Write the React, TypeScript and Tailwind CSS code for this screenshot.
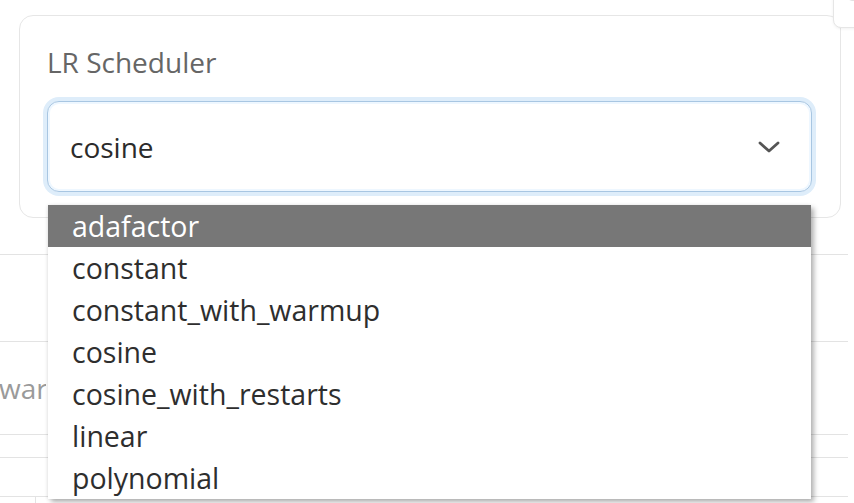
import React from "react";

const options = [
  "adafactor",
  "constant",
  "constant_with_warmup",
  "cosine",
  "cosine_with_restarts",
  "linear",
  "polynomial",
];

export default function App() {
  return (
    <div className="relative w-[854px] h-[503px] overflow-hidden bg-white font-['Open_Sans',sans-serif]">
      <div className="pt-[15px]">
        <div className="ml-[19px] w-[822px] h-[203px] rounded-[14px] border border-[#e6e6e6] bg-white px-[27px] pt-[29px]">
          <div className="text-[28px] leading-[34px] text-[#666666]">LR Scheduler</div>
          <div className="mt-[22px] flex h-[91px] w-[765px] items-center justify-between rounded-[12px] border-[1.5px] border-[#a8c6e2] bg-white pl-[22px] pr-[30px] shadow-[0_0_0_4px_#deedfa,inset_0_0_0_2px_#eef7ff]">
            <span className="text-[28px] leading-[38px] text-[#2b2b2b]">cosine</span>
            <svg width="24" height="14" viewBox="0 0 24 14" fill="none">
              <path d="M3 3 L12 11 L21 3" stroke="#555555" strokeWidth="2.8" strokeLinecap="round" strokeLinejoin="round" />
            </svg>
          </div>
        </div>

        <div className="mt-[36px] w-[848px]">
          <div className="h-[88px] border-t border-b border-[#e3e3e3]" />
          <div className="flex h-[93px] items-center border-b border-[#e3e3e3]">
            <div className="w-[46px] overflow-hidden whitespace-nowrap">
              <span className="-ml-[1px] text-[28px] leading-[38px] text-[#9a9a9a]">war</span>
            </div>
          </div>
          <div className="h-[23px] border-b border-[#e3e3e3]" />
          <div className="h-[39px] border-b border-[#e3e3e3]" />
          <div className="ml-[35px] h-[10px] border-l border-[#e3e3e3]" />
        </div>
      </div>

      <div className="absolute left-[833px] top-[-10px] h-[38px] w-[40px] rounded-bl-[8px] border border-[#e6e6e6] bg-white shadow-[0_1px_3px_rgba(0,0,0,0.06)]">
        <div className="absolute left-[14px] top-[-4px] h-[14px] w-[20px] rounded-[4px] border border-[#e2e2e2]" />
      </div>

      <div className="absolute left-[48px] top-[205px] w-[763px] bg-white shadow-[3px_3px_5px_rgba(0,0,0,0.3),-1px_0_3px_rgba(0,0,0,0.08)]">
        {options.map((o, i) => (
          <div
            key={o}
            className={
              i === 0
                ? "h-[42px] bg-[#777777] px-[24px] text-[28.5px] leading-[42px] text-white"
                : "h-[42px] px-[24px] text-[28.5px] leading-[42px] text-[#2e2e2e]"
            }
          >
            {o}
          </div>
        ))}
      </div>
    </div>
  );
}
